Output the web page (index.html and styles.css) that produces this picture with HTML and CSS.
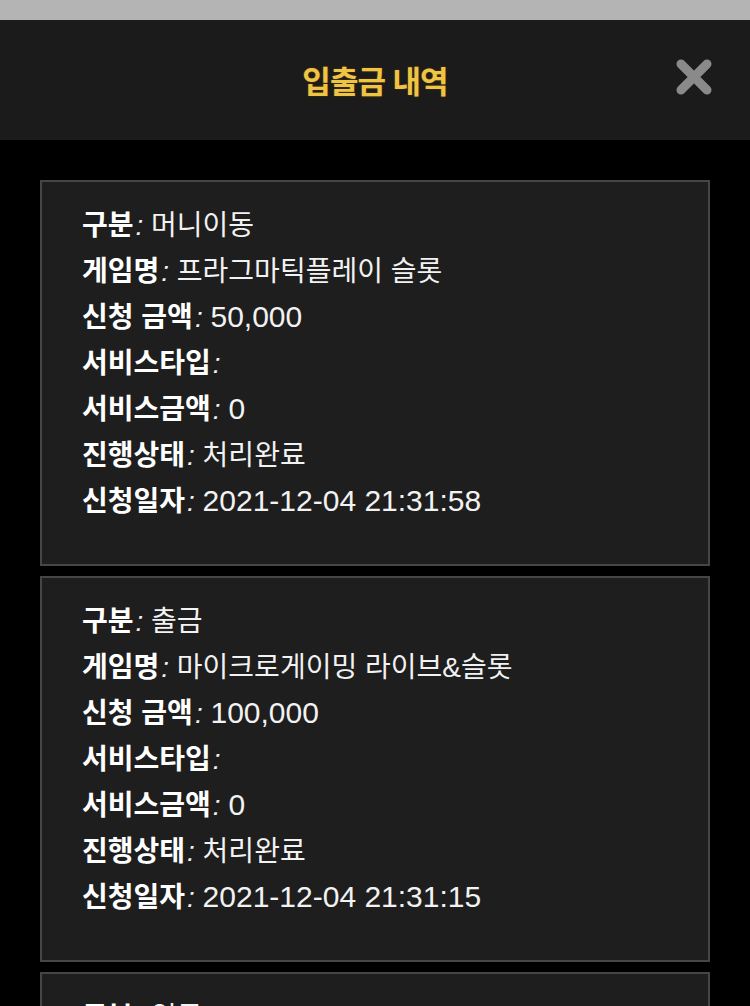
FILE: index.html
```html
<!DOCTYPE html>
<html lang="ko">
<head>
    <meta charset="UTF-8">
    <meta name="viewport" content="width=device-width, initial-scale=1.0">
    <title>입출금 내역</title>
    <link rel="stylesheet" href="styles.css">
</head>
<body>

<div class="status-bar"></div>

<div class="header">
    <h1>입출금 내역</h1>
    <button type="button" class="close-btn" aria-label="닫기">
        <svg width="36" height="36" viewBox="0 0 36 36">
            <path d="M5 5 L31 31 M31 5 L5 31" stroke="#8a8a8a" stroke-width="9" stroke-linecap="round" fill="none"/>
        </svg>
    </button>
</div>

<div class="list">
    <div class="card">
        <div class="row"><b>구분</b><em>:</em> 머니이동</div>
        <div class="row"><b>게임명</b><em>:</em> 프라그마틱플레이 슬롯</div>
        <div class="row"><b>신청 금액</b><em>:</em> <span class="num">50,000</span></div>
        <div class="row"><b>서비스타입</b><em>:</em></div>
        <div class="row"><b>서비스금액</b><em>:</em> <span class="num">0</span></div>
        <div class="row"><b>진행상태</b><em>:</em> 처리완료</div>
        <div class="row"><b>신청일자</b><em>:</em> <span class="num">2021-12-04 21:31:58</span></div>
    </div>

    <div class="card">
        <div class="row"><b>구분</b><em>:</em> 출금</div>
        <div class="row"><b>게임명</b><em>:</em> 마이크로게이밍 라이브&amp;슬롯</div>
        <div class="row"><b>신청 금액</b><em>:</em> <span class="num">100,000</span></div>
        <div class="row"><b>서비스타입</b><em>:</em></div>
        <div class="row"><b>서비스금액</b><em>:</em> <span class="num">0</span></div>
        <div class="row"><b>진행상태</b><em>:</em> 처리완료</div>
        <div class="row"><b>신청일자</b><em>:</em> <span class="num">2021-12-04 21:31:15</span></div>
    </div>

    <div class="card">
        <div class="row"><b>구분</b><em>:</em> 입금</div>
        <div class="row"><b>게임명</b><em>:</em> 마이크로게이밍 라이브&amp;슬롯</div>
        <div class="row"><b>신청 금액</b><em>:</em> <span class="num">100,000</span></div>
    </div>
</div>

</body>
</html>
```

FILE: styles.css
```css
html, body {
    margin: 0;
    padding: 0;
    background-color: #000;
}
body {
    font-family: "Liberation Sans", "Noto Sans CJK KR", sans-serif;
    color: #f2f2f2;
}
.status-bar {
    height: 20px;
    background-color: #b4b4b4;
}
.header {
    position: relative;
    height: 120px;
    background-color: #1b1b1b;
    display: flex;
    align-items: center;
    justify-content: center;
}
.header h1 {
    margin: 0;
    font-family: "Noto Sans CJK KR", sans-serif;
    font-size: 31px;
    font-weight: bold;
    color: #efc445;
    text-shadow: 0 0 2px #5a4010;
    letter-spacing: -1px;
    padding-bottom: 2px;
}
.close-btn {
    position: absolute;
    right: 38px;
    top: 39px;
    width: 36px;
    height: 36px;
    padding: 0;
    border: none;
    background: none;
    cursor: pointer;
}
.close-btn svg {
    display: block;
}
.list {
    padding: 40px 40px 0;
    display: flex;
    flex-direction: column;
    gap: 10px;
}
.card {
    background-color: #1e1e1e;
    border: 2px solid #464646;
    padding: 18px 40px 42px;
}
.row {
    height: 46px;
    line-height: 46px;
    font-size: 28px;
    white-space: nowrap;
}
.row b {
    font-family: "Noto Sans CJK KR", sans-serif;
    font-weight: bold;
    color: #fff;
}
.row em {
    font-style: italic;
    margin-left: 2px;
}
.num {
    font-family: "Liberation Sans", sans-serif;
    font-size: 30px;
    line-height: 1;
}
```
